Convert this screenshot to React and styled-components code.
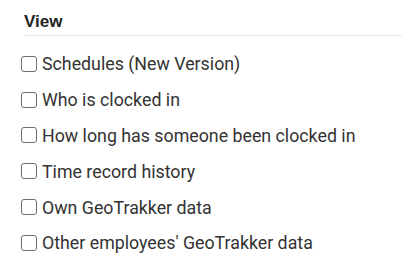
import React from 'react'
import styled, { createGlobalStyle } from 'styled-components'

const Global = createGlobalStyle`
  body {
    margin: 0;
    background: #fff;
    font-family: Roboto, "Liberation Sans", sans-serif;
  }
`

const items = [
  'Schedules (New Version)',
  'Who is clocked in',
  'How long has someone been clocked in',
  'Time record history',
  'Own GeoTrakker data',
  "Other employees' GeoTrakker data",
]

function App() {
  return (
    <>
      <Global />
      <Section>
        <Title>View</Title>
        <List>
          {items.map((label) => (
            <Option key={label}>
              <Box type="checkbox" />
              <span>{label}</span>
            </Option>
          ))}
        </List>
      </Section>
    </>
  )
}

export default App

const Section = styled.div`
  padding: 12px 0 0 24px;
`

const Title = styled.div`
  font-family: "Liberation Sans", Arial, sans-serif;
  font-weight: bold;
  font-size: 17px;
  color: #222;
  line-height: 19px;
  padding-bottom: 4px;
  border-bottom: 1px solid #e8e8e8;
`

const List = styled.div`
  display: flex;
  flex-direction: column;
  margin-top: 10px;
  margin-left: -3px;
`

const Option = styled.label`
  display: flex;
  align-items: center;
  gap: 5px;
  height: 35.8px;
  font-size: 17.8px;
  color: #333;
`

const Box = styled.input`
  appearance: none;
  margin: 0;
  width: 16px;
  height: 16px;
  border: 1px solid #6f6f6f;
  border-radius: 3px;
  background: #fff;
  flex-shrink: 0;
`
